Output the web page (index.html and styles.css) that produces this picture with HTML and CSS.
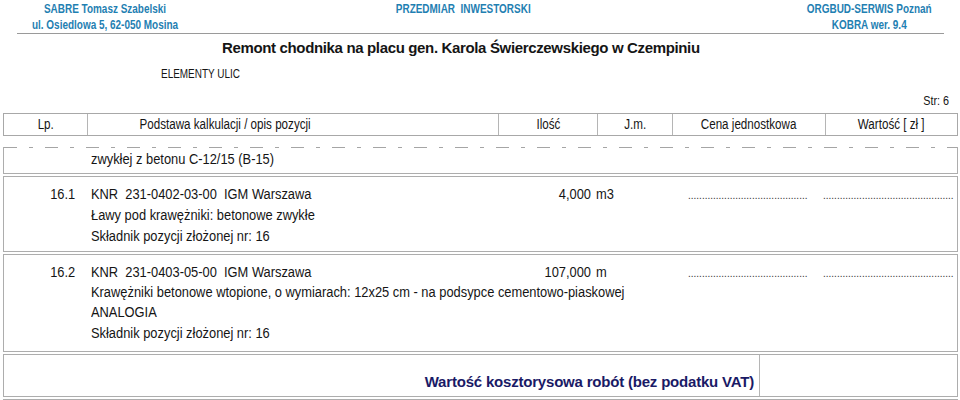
FILE: index.html
```html
<!DOCTYPE html>
<html lang="pl">
<head>
  <meta charset="UTF-8">
  <link rel="stylesheet" href="styles.css">
  <title>Przedmiar inwestorski</title>
</head>
<body>

<div id="page">
  <div class="top">
    <div><span class="n c">SABRE Tomasz Szabelski<br>ul. Osiedlowa 5, 62-050 Mosina</span></div>
    <div><span class="n c">PRZEDMIAR&nbsp; INWESTORSKI</span></div>
    <div class="top-right"><span class="n c">ORGBUD-SERWIS Poznań<br>KOBRA wer. 9.4</span></div>
  </div>
  <div class="top-rule"></div>

  <div class="title">Remont chodnika na placu gen. Karola Świerczewskiego w Czempiniu</div>
  <div class="subtitle"><span class="n">ELEMENTY ULIC</span></div>
  <div class="page-no"><span class="n r">Str: 6</span></div>

  <div class="head-row">
    <div class="cell"><span class="n c">Lp.</span></div>
    <div class="cell c-desc"><span class="n c">Podstawa kalkulacji / opis pozycji</span></div>
    <div class="cell"><span class="n c">Ilość</span></div>
    <div class="cell"><span class="n c">J.m.</span></div>
    <div class="cell"><span class="n c">Cena jednostkowa</span></div>
    <div class="cell last"><span class="n c">Wartość [ zł ]</span></div>
  </div>

  <div class="box box-cont">
    <div class="dash"></div>
    <div class="line indent n">zwykłej z betonu C-12/15 (B-15)</div>
  </div>

  <div class="box item">
    <div class="lp"><span class="n r">16.1</span></div>
    <div class="body">
      <div class="first">
        <span class="n">KNR&nbsp; 231-0402-03-00&nbsp; IGM Warszawa</span>
        <span class="qty n r">4,000</span>
        <span class="unit n">m3</span>
        <span class="dots">...........................................</span>
        <span class="dots">...............................................</span>
      </div>
      <div class="line n">Ławy pod krawężniki: betonowe zwykłe</div>
      <div class="line n">Składnik pozycji złożonej nr: 16</div>
    </div>
  </div>

  <div class="box item tall">
    <div class="lp"><span class="n r">16.2</span></div>
    <div class="body">
      <div class="first">
        <span class="n">KNR&nbsp; 231-0403-05-00&nbsp; IGM Warszawa</span>
        <span class="qty n r">107,000</span>
        <span class="unit n">m</span>
        <span class="dots">...........................................</span>
        <span class="dots">...............................................</span>
      </div>
      <div class="line n">Krawężniki betonowe wtopione, o wymiarach: 12x25 cm - na podsypce cementowo-piaskowej</div>
      <div class="line n">ANALOGIA</div>
      <div class="line n">Składnik pozycji złożonej nr: 16</div>
    </div>
  </div>

  <div class="box total">
    <div class="total-label">Wartość kosztorysowa robót (bez podatku VAT)</div>
    <div class="total-value"></div>
  </div>
  <div class="box next"></div>
</div>

</body>
</html>
```

FILE: styles.css
```css
body {
  margin: 0;
  background-color: #fff;
  color: #151515;
  font-family: 'Liberation Sans', Arial, sans-serif;
  font-size: 15.5px;
}

#page {
  width: 960px;
  height: 400px;
  overflow: hidden;
}

/* Narrow lettering (the print uses Arial Narrow) */
.n {
  display: inline-block;
  transform: scaleX(0.83);
  transform-origin: 0 50%;
}

.n.c {
  transform-origin: 50% 50%;
}

.n.r {
  transform-origin: 100% 50%;
}

/* Company header */
.top {
  display: grid;
  grid-template-columns: 210px 506px 62px 182px;
  padding-top: 1px;
  color: #1f80b2;
  font-weight: bold;
  font-size: 12px;
  line-height: 16px;
  text-align: center;
}

.top-right {
  grid-column: 4;
}

.top-rule {
  height: 1px;
  margin: 0 16px 0 17px;
  background-color: #9a9a9a;
}

.title {
  padding-left: 222px;
  margin-top: 4px;
  font-size: 15px;
  font-weight: bold;
  letter-spacing: -0.35px;
  line-height: 20px;
}

.subtitle {
  padding-left: 161px;
  margin-top: 8px;
  font-size: 12px;
  line-height: 16px;
}

.page-no {
  margin-top: 11px;
  padding-right: 11px;
  text-align: right;
  font-size: 13px;
  line-height: 16px;
}

/* Column header */
.head-row {
  display: grid;
  grid-template-columns: 84px 411px 99px 75px 153px 1fr;
  margin: 4px 2px 0 3px;
  border: 1px solid #a8a8a8;
  font-size: 14px;
  line-height: 21px;
  text-align: center;
}

.head-row .cell {
  border-right: 1px solid #b5b5b5;
}

.head-row .cell.last {
  border-right: none;
}

.head-row .c-desc {
  padding-right: 135px;
}

/* Item boxes */
.box {
  margin: 0 2px 2px 3px;
  border: 1px solid #adadad;
}

.box-cont {
  margin-top: 11px;
  border-top: none;
  height: 26px;
}

.dash {
  height: 1px;
  background-image: repeating-linear-gradient(to right, #a5a5a5 0 13px, transparent 13px 25px, #a5a5a5 25px 29px, transparent 29px 41px);
}

.line {
  display: block;
  line-height: 21px;
  white-space: nowrap;
}

.indent {
  margin-left: 87px;
}

.item {
  display: grid;
  grid-template-columns: 75px 1fr;
  column-gap: 12px;
  padding: 6px 0 5px;
}

.item.tall {
  padding: 7px 0 8px;
}

.item.tall .line,
.item.tall .first,
.item.tall .lp {
  line-height: 20.2px;
}

.item .lp {
  padding-right: 4px;
  text-align: right;
  line-height: 21px;
}

.first {
  display: grid;
  grid-template-columns: 429px 71px 97px 135px 1fr;
  align-items: baseline;
  line-height: 21px;
  white-space: nowrap;
}

.qty {
  text-align: right;
}

.unit {
  padding-left: 6px;
}

.dots {
  color: #333;
  font-size: 10px;
  line-height: 10px;
}

/* Summary */
.total {
  display: grid;
  grid-template-columns: 756px 1fr;
  height: 41px;
}

.total-label {
  border-right: 1px solid #b5b5b5;
  padding: 15px 5px 0 0;
  text-align: right;
  color: #1a1a66;
  font-size: 15px;
  font-weight: bold;
  letter-spacing: -0.2px;
  line-height: 24px;
}

.next {
  height: 20px;
}
```
